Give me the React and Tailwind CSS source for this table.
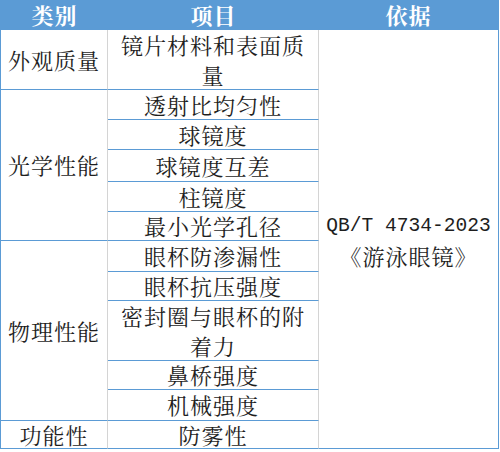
import React from "react";

const cjk = { fontFamily: '"Noto Serif CJK SC", "Noto Sans CJK SC", serif' };

const items = [
  "镜片材料和表面质量",
  "透射比均匀性",
  "球镜度",
  "球镜度互差",
  "柱镜度",
  "最小光学孔径",
  "眼杯防渗漏性",
  "眼杯抗压强度",
  "密封圈与眼杯的附着力",
  "鼻桥强度",
  "机械强度",
  "防雾性",
];

const groups = [
  { name: "外观质量", from: 2, span: 1 },
  { name: "光学性能", from: 3, span: 5 },
  { name: "物理性能", from: 8, span: 5 },
  { name: "功能性", from: 13, span: 1 },
];

const rowStart = {
  2: "row-start-2",
  3: "row-start-3",
  4: "row-start-4",
  5: "row-start-5",
  6: "row-start-6",
  7: "row-start-7",
  8: "row-start-8",
  9: "row-start-9",
  10: "row-start-10",
  11: "row-start-11",
  12: "row-start-12",
  13: "row-start-13",
};

const rowSpan = {
  1: "row-span-1",
  5: "row-span-5",
};

export default function App() {
  return (
    <div className="w-[500px] h-[452px] bg-white" style={cjk}>
      <div className="grid grid-cols-[107px_211px_180px] grid-rows-[30px_60px_30px_30px_32px_30px_29px_31px_29px_60px_29px_31px_28px] border-l border-[#5b9bd5] text-[#1e1e1e] text-[22px] tracking-[1px] leading-[30px]">
        {/* header */}
        <div className="col-start-1 row-start-1 bg-[#5b9bd5] text-white font-bold flex items-center justify-center">
          类别
        </div>
        <div className="col-start-2 row-start-1 bg-[#5b9bd5] text-white font-bold flex items-center justify-center">
          项目
        </div>
        <div className="col-start-3 row-start-1 bg-[#5b9bd5] text-white font-bold flex items-center justify-center border-r border-[#5b9bd5]">
          依据
        </div>

        {groups.map((g) => (
          <div
            key={g.name}
            className={`col-start-1 ${rowStart[g.from]} ${rowSpan[g.span]} flex items-center justify-center border-r border-r-[#d4d4d4] border-b border-b-[#5b9bd5]`}
          >
            {g.name}
          </div>
        ))}

        {items.map((t, i) => (
          <div
            key={t}
            className={`col-start-2 ${rowStart[i + 2]} flex items-center justify-center text-center px-2 border-r border-r-[#d4d4d4] border-b border-b-[#5b9bd5]`}
          >
            {t}
          </div>
        ))}

        <div className="col-start-3 row-start-2 row-end-14 flex flex-col items-center justify-center border-r border-b border-[#5b9bd5] pt-[3px]">
          <div
            className="text-[19.6px] tracking-normal leading-[29px]"
            style={{ fontFamily: '"Liberation Mono", monospace' }}
          >
            QB/T 4734-2023
          </div>
          <div className="leading-[29px]">《游泳眼镜》</div>
        </div>
      </div>
    </div>
  );
}
